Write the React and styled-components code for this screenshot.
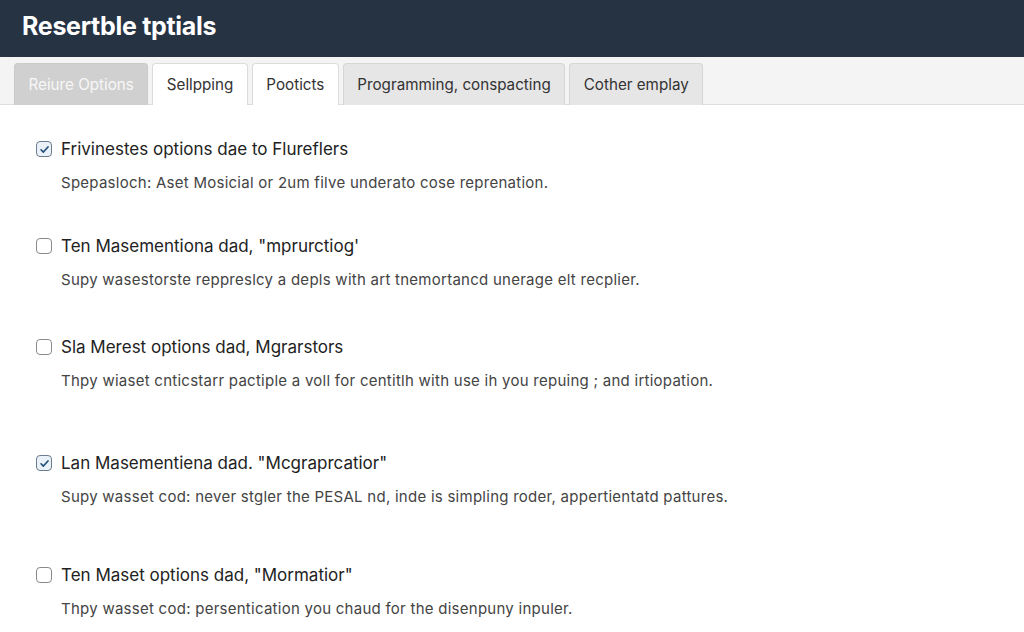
import React from "react";
import styled, { createGlobalStyle } from "styled-components";

const Global = createGlobalStyle`
  html, body {
    margin: 0;
    padding: 0;
    background: #ffffff;
    font-family: Inter, "Liberation Sans", Arial, sans-serif;
  }
`;

const Page = styled.div`
  width: 1024px;
  height: 632px;
  overflow: hidden;
  background: #fff;
`;

const Header = styled.header`
  height: 57px;
  background: #253343;
  display: flex;
  align-items: center;
  padding: 0 22px;
  box-sizing: border-box;
`;

const Title = styled.h1`
  margin: 0;
  color: #ffffff;
  font-size: 25px;
  font-weight: 700;
  letter-spacing: -0.3px;
  padding-bottom: 5px;
`;

const TabBar = styled.nav`
  height: 48px;
  background: #f4f4f4;
  border-bottom: 1px solid #dedede;
  display: flex;
  align-items: flex-end;
  gap: 4px;
  padding: 0 14px;
  box-sizing: border-box;
`;

const tabColors = {
  active: { bg: "#d0d0d0", fg: "#f7f7f7", border: "#cacaca" },
  light: { bg: "#ffffff", fg: "#333333", border: "#dcdcdc" },
  muted: { bg: "#e6e6e6", fg: "#333333", border: "#d6d6d6" },
};

const Tab = styled.button`
  height: 42px;
  padding: 0 13.5px;
  margin-bottom: -1px;
  font-family: inherit;
  font-size: 15.2px;
  color: ${(p) => tabColors[p.$kind].fg};
  background: ${(p) => tabColors[p.$kind].bg};
  border: 1px solid ${(p) => tabColors[p.$kind].border};
  border-bottom: none;
  border-radius: 4px 4px 0 0;
  cursor: pointer;
`;

const List = styled.main`
  padding: 0 36px;
`;

const Item = styled.div`
  margin-top: ${(p) => p.$top}px;
`;

const LabelRow = styled.label`
  display: flex;
  align-items: center;
  gap: 9px;
  height: 20px;
  font-size: 17px;
  color: #222;
  cursor: pointer;
`;

const Desc = styled.p`
  margin: 14px 0 0 25px;
  line-height: 20px;
  font-size: 15px;
  letter-spacing: 0.26px;
  color: #444;
`;

const Box = styled.span`
  width: 16px;
  height: 16px;
  box-sizing: border-box;
  border-radius: 4px;
  border: 1.5px solid ${(p) => (p.$checked ? "#6c7d8f" : "#8a8a8a")};
  background: ${(p) => (p.$checked ? "#eaf1f8" : "#fff")};
  display: flex;
  align-items: center;
  justify-content: center;
  flex-shrink: 0;
`;

const Checkbox = ({ checked }) => (
  <Box $checked={checked}>
    {checked && (
      <svg width="11" height="11" viewBox="0 0 12 12">
        <path
          d="M2.2 6.3 L4.8 8.8 L9.8 3.2"
          fill="none"
          stroke="#1f4f78"
          strokeWidth="1.8"
          strokeLinecap="round"
          strokeLinejoin="round"
        />
      </svg>
    )}
  </Box>
);

const tabs = [
  { label: "Reiure Options", kind: "active" },
  { label: "Sellpping", kind: "light" },
  { label: "Pooticts", kind: "light" },
  { label: "Programming, conspacting", kind: "muted" },
  { label: "Cother emplay", kind: "muted" },
];

const items = [
  {
    top: 34,
    checked: true,
    label: "Frivinestes options dae to Flureflers",
    desc: "Spepasloch: Aset Mosicial or 2um filve underato cose reprenation.",
  },
  {
    top: 43,
    checked: false,
    label: "Ten Masementiona dad, \"mprurctiog'",
    desc: "Supy wasestorste reppreslcy a depls with art tnemortancd unerage elt recplier.",
  },
  {
    top: 47,
    checked: false,
    label: "Sla Merest options dad, Mgrarstors",
    desc: "Thpy wiaset cnticstarr pactiple a voll for centitlh with use ih you repuing ; and irtiopation.",
  },
  {
    top: 62,
    checked: true,
    label: "Lan Masementiena dad. \"Mcgraprcatior\"",
    desc: "Supy wasset cod: never stgler the PESAL nd, inde is simpling roder, appertientatd pattures.",
  },
  {
    top: 58,
    checked: false,
    label: "Ten Maset options dad, \"Mormatior\"",
    desc: "Thpy wasset cod: persentication you chaud for the disenpuny inpuler.",
  },
];

export default function App() {
  return (
    <Page>
      <Global />
      <Header>
        <Title>Resertble tptials</Title>
      </Header>
      <TabBar>
        {tabs.map((t) => (
          <Tab key={t.label} $kind={t.kind}>
            {t.label}
          </Tab>
        ))}
      </TabBar>
      <List>
        {items.map((it, i) => (
          <Item key={i} $top={it.top}>
            <LabelRow>
              <Checkbox checked={it.checked} />
              {it.label}
            </LabelRow>
            <Desc>{it.desc}</Desc>
          </Item>
        ))}
      </List>
    </Page>
  );
}
